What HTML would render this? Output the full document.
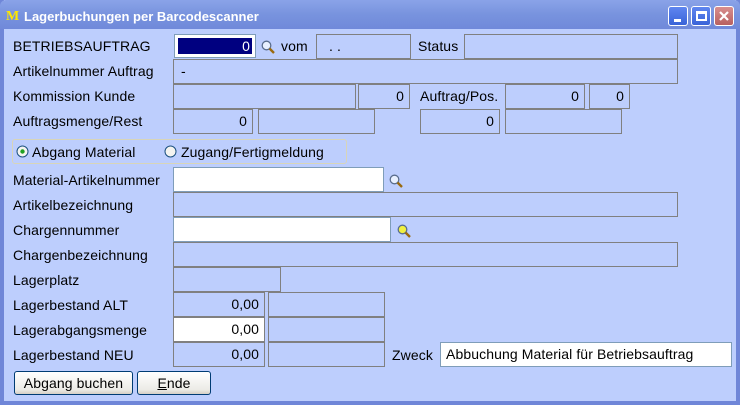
<!DOCTYPE html>
<html><head><meta charset="utf-8"><style>
*{margin:0;padding:0;box-sizing:border-box}
body{width:740px;height:405px;overflow:hidden;background:#BDCEFD;font-family:"Liberation Sans",sans-serif;font-size:14px;letter-spacing:0.1px;color:#000;position:relative}
.win{position:absolute;left:0;top:0;width:740px;height:405px;border:4px solid #6F86D8;border-top:none;background:#BDCEFD}
.title{position:absolute;left:0;top:0;width:740px;height:29px;background:linear-gradient(#8AA3E8,#7893DE 50%,#7089DA);border-radius:6px 6px 0 0;letter-spacing:0}
.title .t{position:absolute;left:24px;top:9px;color:#fff;font-weight:bold;font-size:13px;}
.title .m{position:absolute;left:6px;top:9px;color:#FFE800;font-family:"Liberation Serif",serif;font-weight:bold;font-size:14px}
.tb{position:absolute;top:6px;width:20px;height:20px;border:1px solid #fff;border-radius:3px;background:linear-gradient(#5F86F0,#3A63D8)}
.tb.x{background:linear-gradient(#D88E8E,#B86060)}
.l{position:absolute;white-space:nowrap}
.f{position:absolute;border:1px solid #808080;background:#BDCEFD;text-align:right;padding-right:5px;line-height:22px;white-space:nowrap;overflow:hidden}
.w{position:absolute;border:1px solid #7F9DB9;background:#fff;line-height:22px;text-align:right;padding-right:5px;white-space:nowrap}
.mag{position:absolute;width:14px;height:14px}
.btn{position:absolute;border:1px solid #003C74;border-radius:3px;background:linear-gradient(#FFFFFF,#ECEBE6 80%,#D6D0C5);text-align:center;line-height:22px}
</style></head><body>
<div class="win"></div>
<div class="title"><span class="m">M</span><span class="t">Lagerbuchungen per Barcodescanner</span>
<div class="tb" style="left:668px"><div style="position:absolute;left:5px;top:12px;width:7px;height:3px;background:#fff"></div></div>
<div class="tb" style="left:691px"><div style="position:absolute;left:4px;top:4px;width:11px;height:10px;border:2px solid #fff;border-top-width:3px"></div></div>
<div class="tb x" style="left:714px"><svg width="18" height="18" style="position:absolute;left:0;top:0"><path d="M5 5L13 13M13 5L5 13" stroke="#fff" stroke-width="2.2"/></svg></div>
</div>

<svg width="0" height="0" style="position:absolute"><defs><g id="mg"><circle cx="5.5" cy="5.5" r="4.3" fill="#E8F0FF" stroke="#5A6E8E" stroke-width="1.3"/><path d="M8.5 8.5L13 13" stroke="#9A6A10" stroke-width="2.4"/></g></defs></svg>

<div class="l" style="left:13px;top:38px">BETRIEBSAUFTRAG</div>
<div style="position:absolute;left:174px;top:34px;width:82px;height:24px;background:#fff;border:1px solid #7F9DB9"><div style="position:absolute;left:3px;top:3px;right:3px;bottom:3px;background:#000080;color:#fff;text-align:right;line-height:16px;padding-right:2px">0</div></div>
<svg class="mag" style="left:261px;top:40px"><use href="#mg"/></svg>
<div class="l" style="left:281px;top:38px">vom</div>
<div class="f" style="left:316px;top:34px;width:95px;height:25px;text-align:left;padding-left:12px">. .</div>
<div class="l" style="left:418px;top:38px">Status</div>
<div class="f" style="left:464px;top:34px;width:214px;height:25px"></div>

<div class="l" style="left:13px;top:63px">Artikelnummer Auftrag</div>
<div class="f" style="left:173px;top:59px;width:505px;height:25px;text-align:left;padding-left:7px">-</div>

<div class="l" style="left:13px;top:88px">Kommission Kunde</div>
<div class="f" style="left:173px;top:84px;width:183px;height:25px"></div>
<div class="f" style="left:358px;top:84px;width:52px;height:25px">0</div>
<div class="l" style="left:420px;top:88px">Auftrag/Pos.</div>
<div class="f" style="left:505px;top:84px;width:80px;height:25px">0</div>
<div class="f" style="left:589px;top:84px;width:41px;height:25px">0</div>

<div class="l" style="left:13px;top:113px">Auftragsmenge/Rest</div>
<div class="f" style="left:173px;top:109px;width:80px;height:25px">0</div>
<div class="f" style="left:258px;top:109px;width:117px;height:25px"></div>
<div class="f" style="left:420px;top:109px;width:80px;height:25px">0</div>
<div class="f" style="left:505px;top:109px;width:117px;height:25px"></div>

<div style="position:absolute;left:12px;top:139px;width:335px;height:25px;border:1px solid #D8D5B8;border-radius:3px"></div>
<svg style="position:absolute;left:16px;top:145px" width="13" height="13"><circle cx="6.5" cy="6.5" r="5.5" fill="#F4F4F0" stroke="#1C5180"/><circle cx="6.5" cy="6.5" r="2.2" fill="#21A121"/></svg>
<div class="l" style="left:32px;top:144px">Abgang Material</div>
<svg style="position:absolute;left:164px;top:145px" width="13" height="13"><circle cx="6.5" cy="6.5" r="5.5" fill="#F4F4F0" stroke="#1C5180"/></svg>
<div class="l" style="left:181px;top:144px">Zugang/Fertigmeldung</div>

<div class="l" style="left:13px;top:172px">Material-Artikelnummer</div>
<div class="w" style="left:173px;top:167px;width:211px;height:25px"></div>
<svg class="mag" style="left:389px;top:174px"><use href="#mg"/></svg>

<div class="l" style="left:13px;top:197px">Artikelbezeichnung</div>
<div class="f" style="left:173px;top:192px;width:505px;height:25px"></div>

<div class="l" style="left:13px;top:222px">Chargennummer</div>
<div class="w" style="left:173px;top:217px;width:218px;height:25px"></div>
<svg class="mag" style="left:397px;top:224px"><circle cx="5.5" cy="5.5" r="4.3" fill="#F0F040" stroke="#5A6E8E" stroke-width="1.3"/><path d="M8.5 8.5L13 13" stroke="#9A6A10" stroke-width="2.4"/></svg>

<div class="l" style="left:13px;top:247px">Chargenbezeichnung</div>
<div class="f" style="left:173px;top:242px;width:505px;height:25px"></div>

<div class="l" style="left:13px;top:272px">Lagerplatz</div>
<div class="f" style="left:173px;top:267px;width:108px;height:25px"></div>

<div class="l" style="left:13px;top:297px">Lagerbestand ALT</div>
<div class="f" style="left:173px;top:292px;width:92px;height:25px">0,00</div>
<div class="f" style="left:268px;top:292px;width:117px;height:25px"></div>

<div class="l" style="left:13px;top:322px">Lagerabgangsmenge</div>
<div class="w" style="left:173px;top:317px;width:92px;height:25px;border-color:#808080">0,00</div>
<div class="f" style="left:268px;top:317px;width:117px;height:25px"></div>

<div class="l" style="left:13px;top:347px">Lagerbestand NEU</div>
<div class="f" style="left:173px;top:342px;width:92px;height:25px">0,00</div>
<div class="f" style="left:268px;top:342px;width:117px;height:25px"></div>
<div class="l" style="left:392px;top:347px">Zweck</div>
<div class="w" style="left:440px;top:342px;width:292px;height:25px;text-align:left;padding-left:5px">Abbuchung Material für Betriebsauftrag</div>

<div class="btn" style="left:14px;top:371px;width:119px;height:24px">Abgang buchen</div>
<div class="btn" style="left:137px;top:371px;width:74px;height:24px"><u>E</u>nde</div>
</body></html>
